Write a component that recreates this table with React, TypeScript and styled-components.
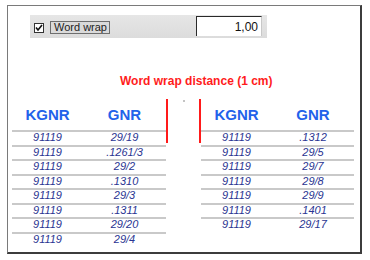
import styled, { createGlobalStyle } from "styled-components";

const GlobalStyle = createGlobalStyle`
  html, body {
    margin: 0;
    padding: 0;
    background: #ffffff;
  }
  body {
    font-family: "Liberation Sans", Arial, sans-serif;
  }
  #root {
    padding: 5px 0 0 7px;
  }
`;

const left = [
  ["91119", "29/19"],
  ["91119", ".1261/3"],
  ["91119", "29/2"],
  ["91119", ".1310"],
  ["91119", "29/3"],
  ["91119", ".1311"],
  ["91119", "29/20"],
  ["91119", "29/4"],
];

const right = [
  ["91119", ".1312"],
  ["91119", "29/5"],
  ["91119", "29/7"],
  ["91119", "29/8"],
  ["91119", "29/9"],
  ["91119", ".1401"],
  ["91119", "29/17"],
];

const App = () => {
  return (
    <>
      <GlobalStyle />
      <Frame>
        <Toolbar>
          <CheckBox>
            <svg width="8" height="8" viewBox="0 0 8 8">
              <polyline
                points="1,3.5 3,6 7,1"
                fill="none"
                stroke="#111"
                strokeWidth="1.6"
              />
            </svg>
          </CheckBox>
          <ToolButton>Word wrap</ToolButton>
          <NumberField>1,00</NumberField>
        </Toolbar>

        <Title>Word wrap distance (1 cm)</Title>

        <Tables>
          <Table>
            <HeaderRow>
              <span>KGNR</span>
              <span>GNR</span>
            </HeaderRow>
            {left.map((r, i) => (
              <Row key={i}>
                <span>{r[0]}</span>
                <span>{r[1]}</span>
              </Row>
            ))}
          </Table>
          <Gap>
            <Dot />
          </Gap>
          <Table $width={153}>
            <HeaderRow>
              <span>KGNR</span>
              <span>GNR</span>
            </HeaderRow>
            {right.map((r, i) => (
              <Row key={i}>
                <span>{r[0]}</span>
                <span>{r[1]}</span>
              </Row>
            ))}
          </Table>
        </Tables>
      </Frame>
    </>
  );
};

const Frame = styled.div`
  box-sizing: border-box;
  width: 355px;
  height: 249px;
  border-top: 1px solid #7a7a7a;
  border-left: 1px solid #7a7a7a;
  border-right: 2px solid #3c3c3c;
  border-bottom: 2px solid #3c3c3c;
  display: flex;
  flex-direction: column;
`;

const Toolbar = styled.div`
  box-sizing: border-box;
  margin: 9px 0 0 22px;
  width: 237px;
  height: 23px;
  background: linear-gradient(#e6e6e6, #dcdcdc);
  display: flex;
  align-items: center;
  padding: 0 4px 0 4px;
`;

const CheckBox = styled.div`
  box-sizing: border-box;
  width: 10px;
  height: 10px;
  background: #fff;
  border: 1px solid #333;
  display: flex;
  align-items: center;
  justify-content: center;
  margin-top: 2px;
`;

const ToolButton = styled.div`
  box-sizing: border-box;
  margin-left: 6px;
  margin-top: 1px;
  height: 13px;
  width: 60px;
  border: 1px solid #6e6e6e;
  background: #dadada;
  color: #222;
  font-size: 11px;
  line-height: 11px;
  padding-left: 3px;
  white-space: nowrap;
`;

const NumberField = styled.div`
  box-sizing: border-box;
  margin-left: auto;
  margin-right: 1px;
  align-self: flex-start;
  margin-top: 1px;
  width: 66px;
  height: 20px;
  background: #fff;
  border-top: 1px solid #2a2a2a;
  border-left: 1px solid #2a2a2a;
  border-right: 1px solid #c8c8c8;
  color: #111;
  font-size: 12px;
  line-height: 20px;
  text-align: right;
  padding-right: 3px;
`;

const Title = styled.div`
  margin: 36px 0 0 112px;
  color: #ff1c1c;
  font-weight: bold;
  font-size: 12px;
  line-height: 14px;
  white-space: nowrap;
`;

const Tables = styled.div`
  display: flex;
  align-items: flex-start;
  margin: 11px 0 0 4px;
`;

const Table = styled.div<{ $width?: number }>`
  width: ${(p) => p.$width ?? 154}px;
  display: flex;
  flex-direction: column;
`;

const HeaderRow = styled.div`
  display: grid;
  grid-template-columns: 71px 1fr;
  padding: 7px 0;
  color: #2262ea;
  font-weight: bold;
  font-size: 15px;
  line-height: 17px;
  text-align: center;
`;

const Row = styled.div`
  display: grid;
  grid-template-columns: 71px 1fr;
  border-top: 2px solid #c9c9c9;
  height: 12.5px;
  color: #2a3592;
  font-style: italic;
  font-size: 11px;
  line-height: 11px;
  text-align: center;
`;

const Gap = styled.div`
  box-sizing: border-box;
  width: 35px;
  height: 44px;
  border-left: 2px solid #ff1a1a;
  border-right: 2px solid #ff1a1a;
  display: flex;
  justify-content: center;
`;

const Dot = styled.div`
  width: 2px;
  height: 2px;
  margin-top: 1px;
  background: #c4c4c4;
`;

export default App;
